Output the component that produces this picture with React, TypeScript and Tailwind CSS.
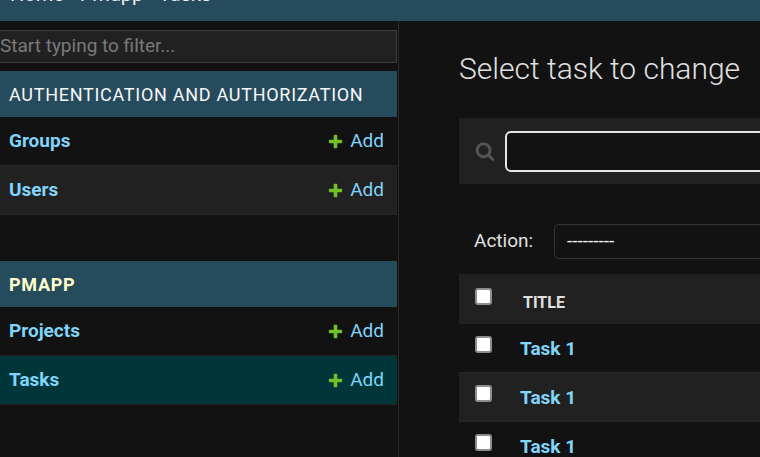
import React from 'react';

const AddIcon = () => (
  <svg viewBox="0 0 1792 1792" className="w-[17px] h-[17px]">
    <path
      fill="#70bf2b"
      d="M1600 796v192q0 40-28 68t-68 28h-416v416q0 40-28 68t-68 28h-192q-40 0-68-28t-28-68v-416h-416q-40 0-68-28t-28-68v-192q0-40 28-68t68-28h416v-416q0-40 28-68t68-28h192q40 0 68 28t28 68v416h416q40 0 68 28t28 68z"
    />
  </svg>
);

const SearchIcon = () => (
  <svg viewBox="0 0 1792 1792" className="w-[20px] h-[20px]">
    <path
      fill="#555555"
      d="M1216 832q0-185-131.5-316.5t-316.5-131.5-316.5 131.5-131.5 316.5 131.5 316.5 316.5 131.5 316.5-131.5 131.5-316.5zm512 832q0 52-38 90t-90 38q-54 0-90-38l-343-342q-179 124-399 124-143 0-273.5-55.5t-225-150-150-225-55.5-273.5 55.5-273.5 150-225 225-150 273.5-55.5 273.5 55.5 225 150 150 225 55.5 273.5q0 220-124 399l343 343q37 37 37 90z"
    />
  </svg>
);

const Checkbox = () => (
  <div className="w-[17px] h-[17px] shrink-0 bg-white border-2 border-[#8d8d8d] rounded-[3px]" />
);

const ModelRow = ({ name, striped, current }: { name: string; striped?: boolean; current?: boolean }) => (
  <div
    className={`h-[49px] flex items-center justify-between pl-[9px] pr-[13px] border-b border-[#272727] ${
      current ? 'bg-[#00363a]' : striped ? 'bg-[#212121]' : 'bg-[#121212]'
    }`}
  >
    <span className="text-[19px] font-bold text-[#81d4fa]">{name}</span>
    <span className="flex items-center gap-[6px] text-[19px] text-[#81d4fa]">
      <AddIcon /> Add
    </span>
  </div>
);

const Caption = ({ label, current }: { label: string; current?: boolean }) => (
  <div
    className={`h-[46px] flex items-center pl-[9px] bg-[#264b5d] text-[18px] uppercase tracking-[0.72px] ${
      current ? 'text-[#ffffcc] font-bold' : 'text-[#f7f7f7]'
    }`}
  >
    {label}
  </div>
);

const App: React.FC = () => {
  return (
    <div className="w-[760px] h-[457px] overflow-hidden bg-[#121212] font-['Roboto','Liberation_Sans',sans-serif] text-[#e0e0e0]">
      {/* Breadcrumbs, scrolled mostly out of view */}
      <div className="h-[21px] bg-[#264b5d] overflow-hidden pl-[10px]">
        <div className="-mt-[18px] text-[20px] leading-[24px] text-[#f0f0f0] whitespace-nowrap">
          Home › Pmapp › Tasks
        </div>
      </div>

      <div className="flex">
        {/* Nav sidebar */}
        <div className="w-[399px] shrink-0 border-r border-[#2a2a2a] h-[436px]">
          <div className="w-[397px]">
            <div className="mt-[9px] h-[33px] -ml-[6px] w-[403px] bg-[#212121] border border-[#3c3c3c] flex items-center pl-[5px]">
              <span className="text-[19px] text-[#7a7a7a] whitespace-nowrap">Start typing to filter...</span>
            </div>

            <div className="mt-[8px]">
              <Caption label="Authentication and Authorization" />
              <ModelRow name="Groups" />
              <ModelRow name="Users" striped />
            </div>

            <div className="mt-[46px]">
              <Caption label="Pmapp" current />
              <ModelRow name="Projects" />
              <ModelRow name="Tasks" current />
            </div>
          </div>
        </div>

        {/* Main content */}
        <div className="flex-1 min-w-0 pl-[60px]">
          <h1 className="mt-[30px] text-[30px] leading-[35px] font-light text-[#e0e0e0] whitespace-nowrap">
            Select task to change
          </h1>

          <div className="mt-[32px] h-[66px] w-[400px] bg-[#212121] flex items-center pl-[16px]">
            <SearchIcon />
            <div className="ml-[10px] h-[41px] w-[300px] shrink-0 border-2 border-[#e6e6e6] rounded-[6px] bg-[#121212]" />
          </div>

          <div className="mt-[40px] flex items-center pl-[15px] w-[400px]">
            <span className="text-[19px] text-[#e0e0e0] w-[80px] shrink-0">Action:</span>
            <div className="h-[35px] w-[260px] shrink-0 border border-[#353535] rounded-[5px] bg-[#121212] flex items-center pl-[12px] text-[19px] text-[#f0f0f0]">
              ---------
            </div>
          </div>

          <div className="mt-[15px] w-[400px]">
            <div className="h-[50px] bg-[#212121] flex items-start pt-[14px] pl-[16px]">
              <Checkbox />
              <span className="ml-[31px] mt-[3px] text-[16px] font-bold uppercase text-[#e0e0e0]">Title</span>
            </div>
            {[false, true, false].map((striped, i) => (
              <div
                key={i}
                className={`h-[49px] flex items-start pt-[12px] pl-[16px] border-b border-[#272727] ${
                  striped ? 'bg-[#212121]' : 'bg-[#121212]'
                }`}
              >
                <Checkbox />
                <span className="ml-[28px] -mt-[1px] text-[19px] font-bold text-[#81d4fa]">Task 1</span>
              </div>
            ))}
          </div>
        </div>
      </div>
    </div>
  );
};

export default App;
